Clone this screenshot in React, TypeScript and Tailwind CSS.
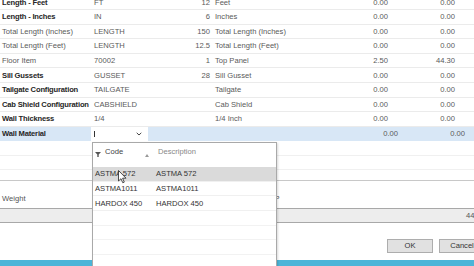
import React from "react";

type Row = {
  label: string;
  bold: boolean;
  code: string;
  qty: string;
  desc: string;
  v1: string;
  v2: string;
};

const rows: Row[] = [
  { label: "Length - Feet", bold: true, code: "FT", qty: "12", desc: "Feet", v1: "0.00", v2: "0.00" },
  { label: "Length - Inches", bold: true, code: "IN", qty: "6", desc: "Inches", v1: "0.00", v2: "0.00" },
  { label: "Total Length (Inches)", bold: false, code: "LENGTH", qty: "150", desc: "Total Length (Inches)", v1: "0.00", v2: "0.00" },
  { label: "Total Length (Feet)", bold: false, code: "LENGTH", qty: "12.5", desc: "Total Length (Feet)", v1: "0.00", v2: "0.00" },
  { label: "Floor Item", bold: false, code: "70002", qty: "1", desc: "Top Panel", v1: "2.50", v2: "44.30" },
  { label: "Sill Gussets", bold: true, code: "GUSSET", qty: "28", desc: "Sill Gusset", v1: "0.00", v2: "0.00" },
  { label: "Tailgate Configuration", bold: true, code: "TAILGATE", qty: "", desc: "Tailgate", v1: "0.00", v2: "0.00" },
  { label: "Cab Shield Configuration", bold: true, code: "CABSHIELD", qty: "", desc: "Cab Shield", v1: "0.00", v2: "0.00" },
  { label: "Wall Thickness", bold: true, code: "1/4", qty: "", desc: "1/4 Inch", v1: "0.00", v2: "0.00" },
];

const options = [
  { code: "ASTMA 572", desc: "ASTMA 572", selected: true },
  { code: "ASTMA1011", desc: "ASTMA1011", selected: false },
  { code: "HARDOX 450", desc: "HARDOX 450", selected: false },
];

export default function App() {
  return (
    <div className="relative w-[474px] h-[266px] overflow-hidden bg-white font-['Liberation_Sans',Arial,sans-serif] text-[7.6px] text-[#5a5a5a]">
      <div className="flex flex-col h-full">
        <div className="-mt-[4.3px]">
          {rows.map((r, i) => (
            <div key={i} className="flex h-[14.56px] items-center border-b border-[#ebebeb]">
              <div className={`w-[92px] pl-[2px] whitespace-nowrap ${r.bold ? "font-bold text-[#262626] tracking-[-0.18px]" : "text-[#5a5a5a]"}`}>
                {r.label}
              </div>
              <div className="w-[92px] pl-[2px] whitespace-nowrap">{r.code}</div>
              <div className="w-[26px] text-right whitespace-nowrap">{r.qty}</div>
              <div className="w-[150px] pl-[5px] whitespace-nowrap">{r.desc}</div>
              <div className="w-[28px] text-right">{r.v1}</div>
              <div className="w-[67px] text-right">{r.v2}</div>
            </div>
          ))}
          <div className="flex h-[14.56px] items-center bg-[#d8e7f6]">
            <div className="w-[91px] pl-[2px] font-bold text-[#262626] tracking-[-0.18px] whitespace-nowrap">Wall Material</div>
            <div className="w-[57px] h-full bg-white flex items-center pl-[3px] pr-[6px]">
              <div className="w-px h-[6px] bg-[#333]"></div>
              <div className="flex-1"></div>
              <svg width="6" height="4" viewBox="0 0 6 4">
                <path d="M0.7 0.8 L3 3 L5.3 0.8" fill="none" stroke="#444" strokeWidth="1" />
              </svg>
            </div>
            <div className="w-[222px]"></div>
            <div className="w-[28px] text-right">0.00</div>
            <div className="w-[67px] text-right">0.00</div>
          </div>
          <div className="h-[14.56px] border-b border-[#f0f0f0]"></div>
          <div className="h-[14.56px] border-b border-[#f0f0f0]"></div>
        </div>
        <div className="h-[28px] mt-[9.5px] border-t border-[#c8c8c8] flex items-end pb-[3px]">
          <div className="pl-[2px] text-[#555]">Weight</div>
          <div className="pl-[249px] text-[#555]">P</div>
        </div>
        <div className="h-[15px] bg-[#ededed] border-y border-[#a8a8a8] flex items-center justify-end overflow-hidden">
          <div className="text-[#555] whitespace-nowrap -mr-[11px]">44.30</div>
        </div>
        <div className="flex-1 flex items-start pl-[387px] gap-[6px] pt-[16px]">
          <button className="w-[46px] h-[14px] shrink-0 bg-[#e1e1e1] border border-[#adadad] text-[#333] text-[7.6px] flex items-center justify-center">
            OK
          </button>
          <button className="w-[46px] h-[14px] shrink-0 bg-[#e1e1e1] border border-[#adadad] text-[#333] text-[7.6px] flex items-center justify-center">
            Cancel
          </button>
        </div>
        <div className="h-[6px] bg-[#4cb5d8] shrink-0"></div>
      </div>

      {/* Dropdown lookup */}
      <div className="absolute left-[92px] top-[141.5px] w-[185px] h-[130px] bg-white border-x border-t border-[#a9a9a9] shadow-[1px_1px_2px_rgba(0,0,0,0.15)]">
        <div className="relative h-[24.5px]">
          <svg className="absolute left-[2px] top-[9px]" width="6" height="5" viewBox="0 0 6 5">
            <path d="M0 0 H6 L3.7 2.4 V5 H2.3 V2.4 Z" fill="#555" />
          </svg>
          <div className="absolute left-[12px] top-[3px] text-[#444]">Code</div>
          <svg className="absolute left-[52px] top-[11px]" width="4" height="3" viewBox="0 0 4 3">
            <path d="M0 3 L2 0 L4 3 Z" fill="#999" />
          </svg>
          <div className="absolute left-[65px] top-[3px] text-[#888]">Description</div>
        </div>
        <div className="flex flex-col">
          {options.map((o, i) => (
            <div
              key={i}
              className={`flex h-[14.7px] items-center border-b border-[#f0f0f0] ${o.selected ? "bg-[#dadada]" : ""}`}
            >
              <div className="w-[62px] pl-[2px] text-[#333] whitespace-nowrap">{o.code}</div>
              <div className="pl-[1px] text-[#333] whitespace-nowrap">{o.desc}</div>
            </div>
          ))}
          {[0, 1, 2, 3, 4].map((k) => (
            <div key={k} className="h-[14.7px] border-b border-[#f2f2f2]"></div>
          ))}
        </div>
      </div>

      {/* Mouse pointer */}
      <svg className="absolute left-[118px] top-[170px]" width="9" height="14" viewBox="0 0 9 14">
        <path d="M0.5 0.5 L0.5 11 L3 8.7 L4.8 12.8 L6.3 12.1 L4.6 8.2 L8 8.2 Z" fill="#fff" stroke="#222" strokeWidth="0.8" strokeLinejoin="round" />
      </svg>
    </div>
  );
}
